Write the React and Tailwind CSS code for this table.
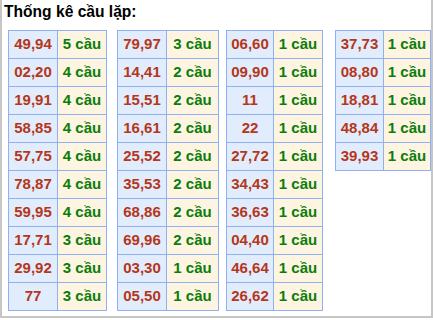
import React from 'react'

const tables = [
  {
    w: ['w-[49px]', 'w-[49px]'],
    rows: [['49,94', 5], ['02,20', 4], ['19,91', 4], ['58,85', 4], ['57,75', 4], ['78,87', 4], ['59,95', 4], ['17,71', 3], ['29,92', 3], ['77', 3]],
  },
  {
    w: ['w-[49px]', 'w-[52px]'],
    rows: [['79,97', 3], ['14,41', 2], ['15,51', 2], ['16,61', 2], ['25,52', 2], ['35,53', 2], ['68,86', 2], ['69,96', 2], ['03,30', 1], ['05,50', 1]],
  },
  {
    w: ['w-[47px]', 'w-[49px]'],
    rows: [['06,60', 1], ['09,90', 1], ['11', 1], ['22', 1], ['27,72', 1], ['34,43', 1], ['36,63', 1], ['04,40', 1], ['46,64', 1], ['26,62', 1]],
  },
  {
    w: ['w-[48px]', 'w-[47px]'],
    rows: [['37,73', 1], ['08,80', 1], ['18,81', 1], ['48,84', 1], ['39,93', 1]],
  },
]

const CauTable = ({ data }) => {
  return (
    <div className="flex flex-col border-l border-t border-[#8fb0f2]">
      {data.rows.map((r, i) => (
        <div key={i} className="flex">
          <div className={`${data.w[0]} h-[28px] flex items-center justify-center border-r border-b border-[#8fb0f2] bg-[#e1edfd] text-[#b5361a]`}>
            {r[0]}
          </div>
          <div className={`${data.w[1]} h-[28px] flex items-center justify-center border-r border-b border-[#8fb0f2] bg-[#fdf4e1] text-[#0a7d0a]`}>
            {r[1]} cầu
          </div>
        </div>
      ))}
    </div>
  )
}

const App = () => {
  return (
    <div className="w-[433px] h-[318px] bg-white border-x-2 border-b-2 border-[#c6c6c6] pt-[3px] pl-[2px] font-['Liberation_Sans',Arial,sans-serif] font-bold text-[15px]">
      <p className="text-black text-[15.6px] leading-[17px]">Thống kê cầu lặp:</p>
      <div className="flex mt-[10px] ml-[4px]">
        {tables.map((t, i) => (
          <div key={i} className="w-[109px] shrink-0 flex items-start">
            <CauTable data={t} />
          </div>
        ))}
      </div>
    </div>
  )
}

export default App
